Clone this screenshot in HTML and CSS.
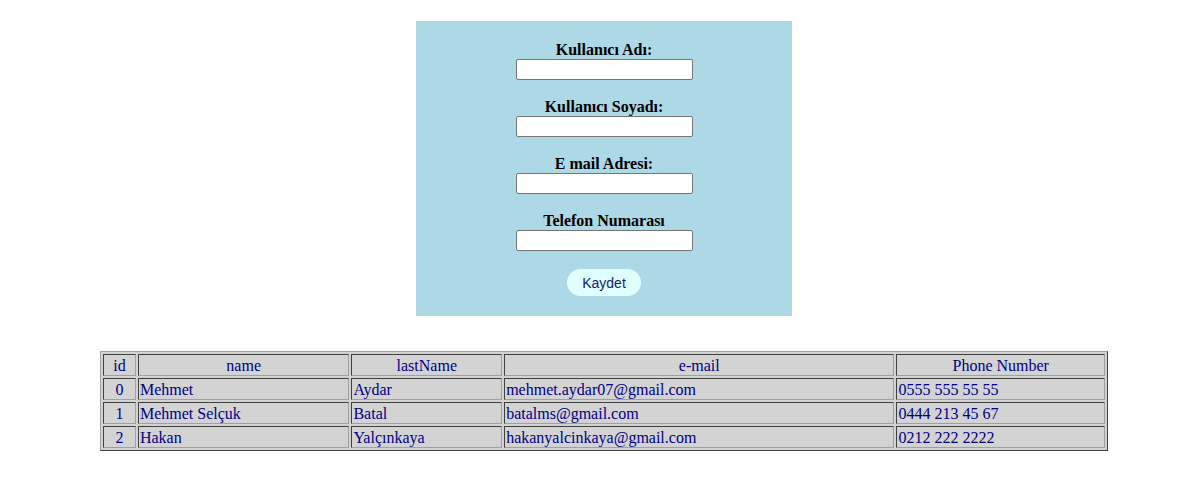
FILE: index.html
```html
<!DOCTYPE html>
<html lang="tr">
<head>
<meta charset="utf-8">
<title>Kayıt</title>
<link rel="stylesheet" href="styles.css">
</head>
<body>
<div class="page">
  <form class="form-box">
    <label class="field">
      <span class="field-label">Kullanıcı Adı:</span>
      <input type="text" class="field-input">
    </label>
    <label class="field">
      <span class="field-label">Kullanıcı Soyadı:</span>
      <input type="text" class="field-input">
    </label>
    <label class="field">
      <span class="field-label">E mail Adresi:</span>
      <input type="text" class="field-input">
    </label>
    <label class="field">
      <span class="field-label">Telefon Numarası</span>
      <input type="text" class="field-input">
    </label>
    <button type="button" class="save-btn">Kaydet</button>
  </form>

  <table class="users" border="1">
    <colgroup>
      <col class="c-id">
      <col class="c-name">
      <col class="c-last">
      <col class="c-mail">
      <col class="c-phone">
    </colgroup>
    <thead>
      <tr><th>id</th><th>name</th><th>lastName</th><th>e-mail</th><th>Phone Number</th></tr>
    </thead>
    <tbody>
      <tr><td class="id">0</td><td>Mehmet</td><td>Aydar</td><td>mehmet.aydar07@gmail.com</td><td>0555 555 55 55</td></tr>
      <tr><td class="id">1</td><td>Mehmet Selçuk</td><td>Batal</td><td>batalms@gmail.com</td><td>0444 213 45 67</td></tr>
      <tr><td class="id">2</td><td>Hakan</td><td>Yalçınkaya</td><td>hakanyalcinkaya@gmail.com</td><td>0212 222 2222</td></tr>
    </tbody>
  </table>
</div>
</body>
</html>
```

FILE: styles.css
```css
html, body {
  margin: 0;
  padding: 0;
  background: #ffffff;
}

body {
  font-family: "Liberation Serif", "Times New Roman", serif;
  font-size: 16px;
}

.page {
  padding: 21px 0 0 8px;
  display: flex;
  flex-direction: column;
  align-items: center;
}

.form-box {
  width: 376px;
  box-sizing: border-box;
  background: #add8e6;
  padding: 20px 0 20px;
  margin: 0;
  display: flex;
  flex-direction: column;
  align-items: center;
}

.field {
  display: flex;
  flex-direction: column;
  align-items: center;
  margin-bottom: 18px;
}

.field-label {
  font-weight: bold;
  line-height: 18px;
  height: 18px;
  color: #000;
}

.field-input {
  width: 177px;
  height: 21px;
  box-sizing: border-box;
  border: 1px solid #767676;
  border-radius: 2px;
  background: #fff;
  padding: 1px 2px;
  margin: 0;
  font-family: "Liberation Sans", Arial, sans-serif;
  font-size: 13.33px;
}

.save-btn {
  margin-top: 0;
  width: 74px;
  height: 27px;
  border: none;
  border-radius: 14px;
  background: #e0ffff;
  color: #1a1a6e;
  font-family: "Liberation Sans", Arial, sans-serif;
  font-size: 14px;
  padding: 0;
}

.users {
  margin-top: 35px;
  width: 1008px;
  border-collapse: separate;
  border-spacing: 2px;
  border: 1px solid;
  border-color: #a0a0a0 #404040 #404040 #a0a0a0;
  background: #d3d3d3;
  color: #000080;
  font-size: 16px;
}

.users th,
.users td {
  border: 1px solid;
  border-color: #404040 #a0a0a0 #a0a0a0 #404040;
  padding: 2px 1px 0;
  line-height: 18px;
  height: 18px;
}

.users th {
  font-weight: normal;
  text-align: center;
}

.users td {
  text-align: left;
}

.users td.id {
  text-align: center;
}

.c-id { width: 33px; }
.c-name { width: 212px; }
.c-last { width: 151px; }
.c-mail { width: 391px; }
.c-phone { width: 209px; }
```
